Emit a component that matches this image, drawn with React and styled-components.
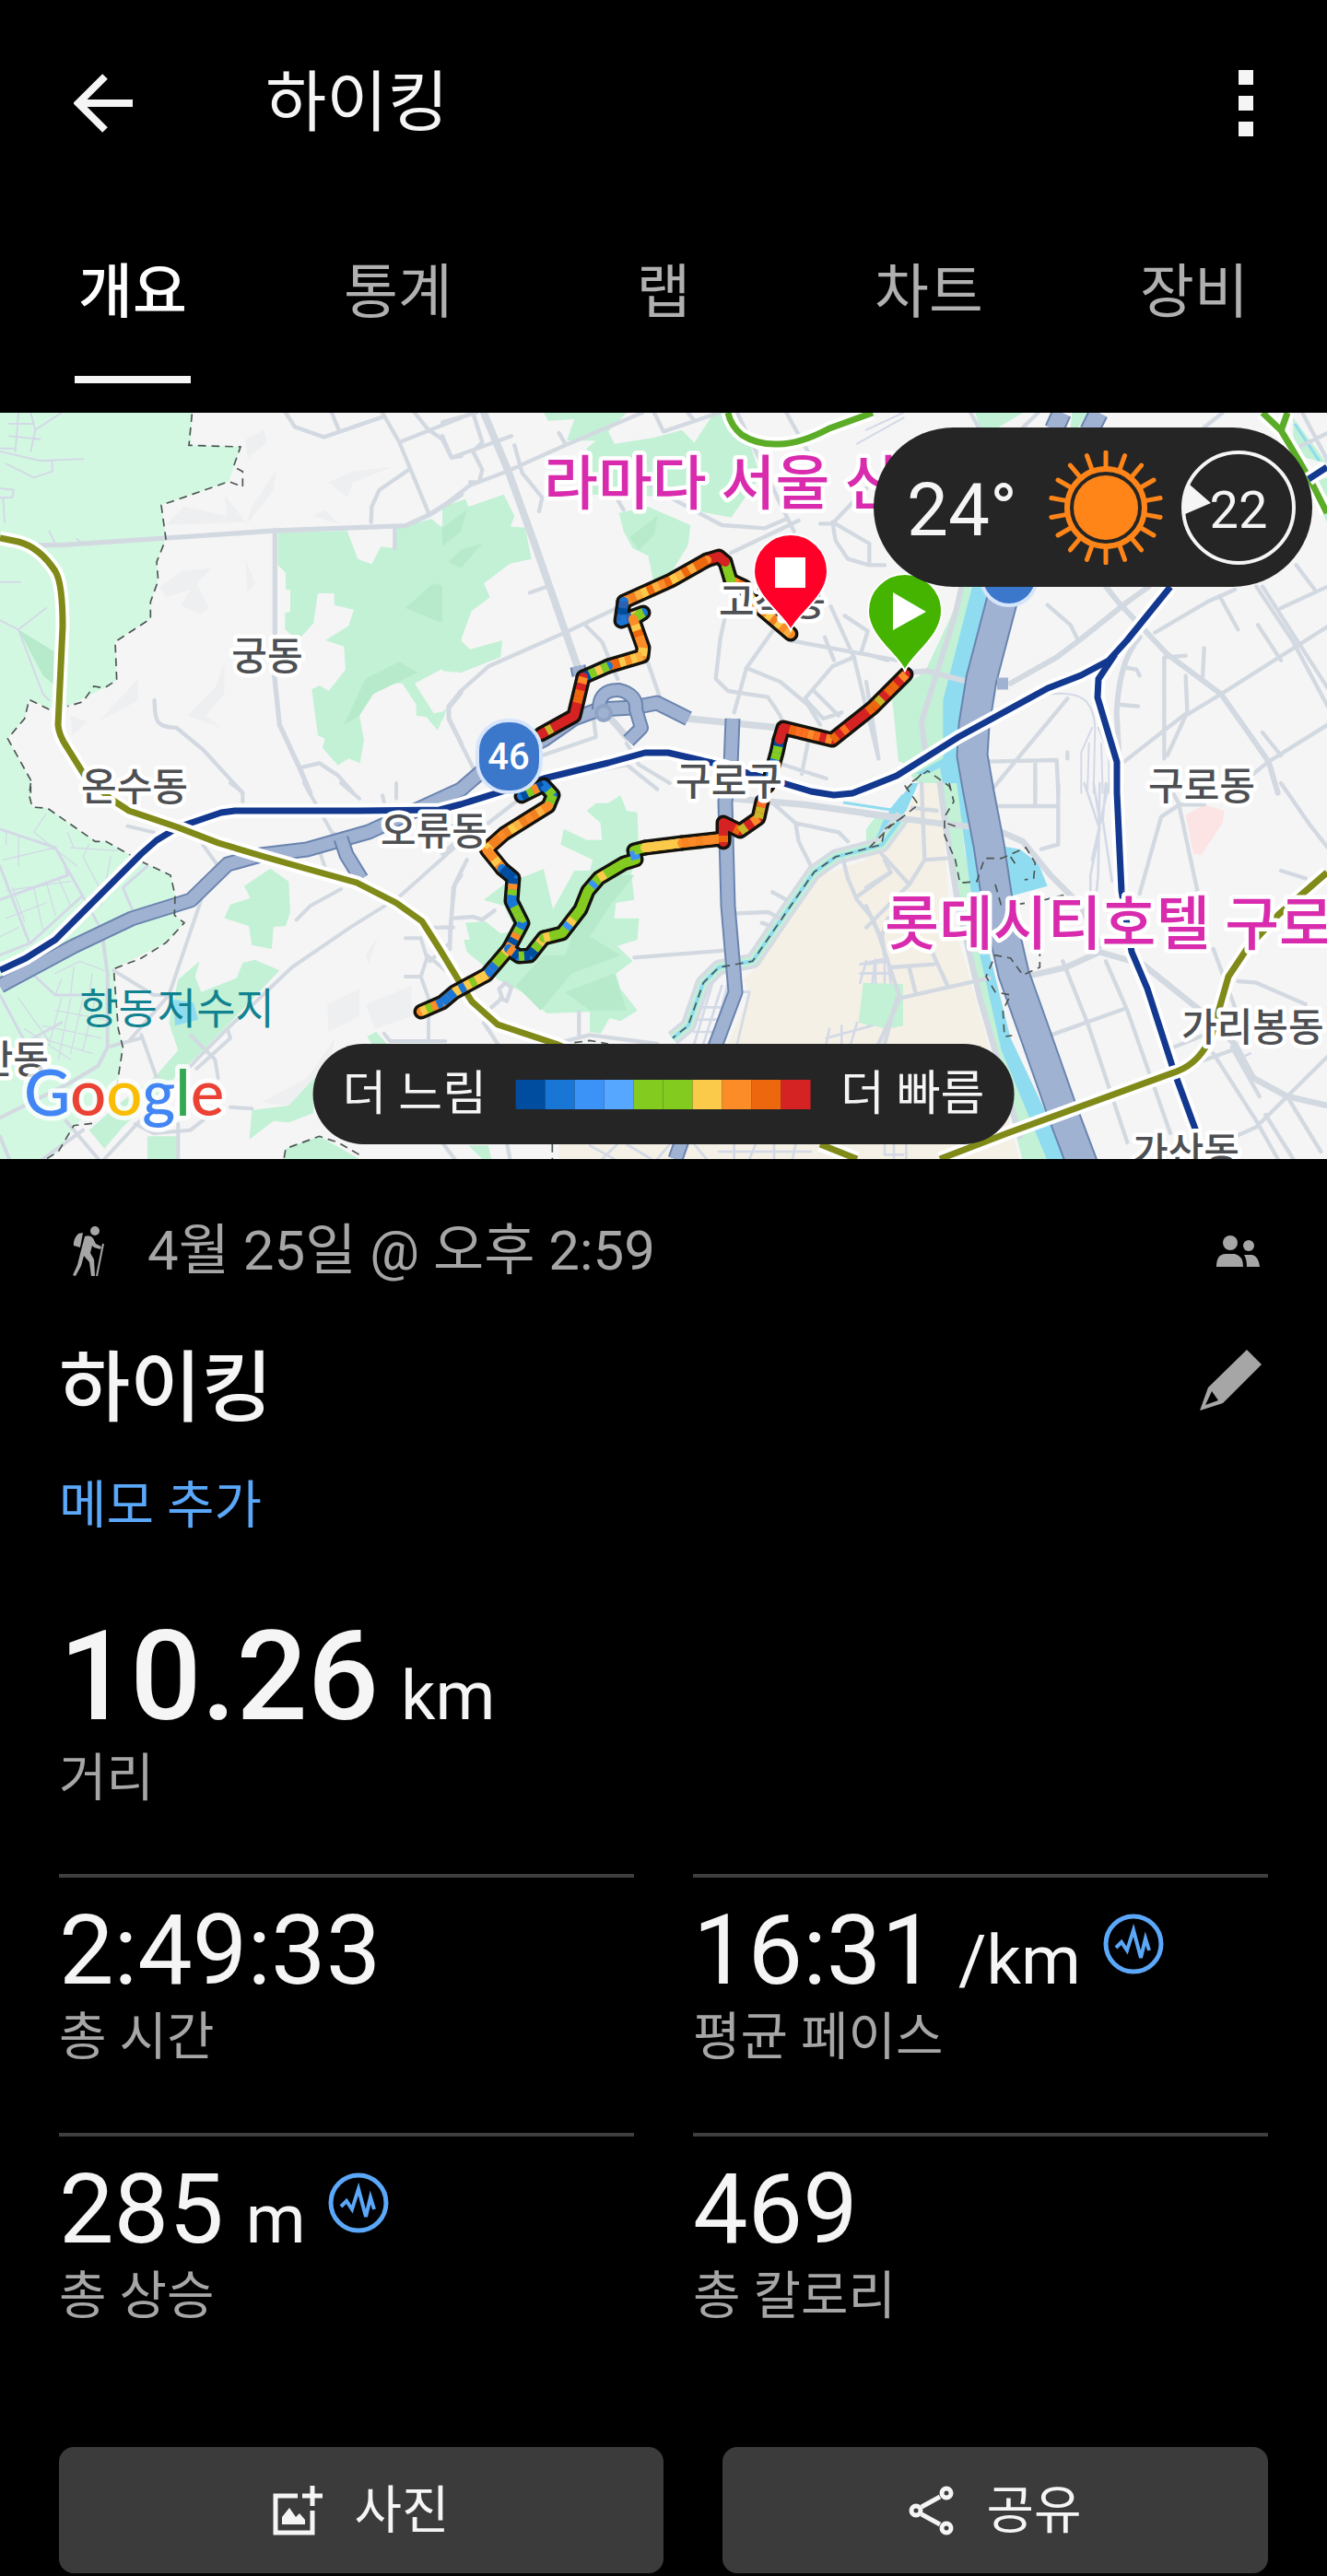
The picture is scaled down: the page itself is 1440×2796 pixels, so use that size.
import React from 'react';
import styled, { createGlobalStyle } from 'styled-components';

const GlobalStyle = createGlobalStyle`
    *, *::before, *::after {
        box-sizing: border-box;
    }
    body {
        margin: 0;
        background: #000;
        color: #f5f5f5;
        font-family: Roboto, 'Noto Sans CJK KR', sans-serif;
    }
    button {
        padding: 0;
        border: 0;
        background: none;
        color: inherit;
        font: inherit;
        cursor: pointer;
    }
    svg {
        display: block;
        flex: none;
    }
`;

const Page = styled.div`
    min-height: 100vh;
`;

const TopBar = styled.header`
    display: flex;
    align-items: center;
    height: 224px;
    padding: 0 72px;
`;

const IconButton = styled.button`
    display: grid;
    place-items: center;
    width: ${(props) => props.$width || 80}px;
    height: 80px;
`;

const BarTitle = styled.h1`
    flex: 1;
    margin: 0 0 0 136px;
    font-size: 72px;
    font-weight: 400;
    line-height: 80px;
`;

const Tabs = styled.nav`
    display: grid;
    grid-template-columns: repeat(5, 1fr);
    justify-items: center;
    height: 224px;
    padding-top: 54px;
`;

const Tab = styled.button`
    height: 138px;
    padding: 0 4px 50px;
    border-bottom: 8px solid ${(props) => (props.$active ? '#f5f5f5' : 'transparent')};
    color: ${(props) => (props.$active ? '#fff' : '#b0b0b0')};
    font-size: 64px;
    font-weight: ${(props) => (props.$active ? 500 : 400)};
    line-height: 80px;
`;

const MapPanel = styled.section`
    position: relative;
    overflow: hidden;
    background: #f5f5f5;
`;

const MapSvg = styled.svg`
    width: 100%;
    height: auto;
`;

const Weather = styled.div`
    position: absolute;
    top: 16px;
    right: 16px;
    display: flex;
    align-items: center;
    gap: 20px;
    height: 173px;
    padding: 0 18px 0 36px;
    border-radius: 87px;
    background: #252525;
`;

const Temperature = styled.span`
    width: 134px;
    padding-top: 6px;
    font-size: 80px;
    line-height: 96px;
`;

const Wind = styled.div`
    display: grid;
    place-items: center;
    font-size: 56px;
    line-height: 64px;

    > * {
        grid-area: 1 / 1;
    }

    span {
        padding-top: 6px;
    }
`;

const Legend = styled.div`
    position: absolute;
    bottom: 16px;
    left: 50%;
    display: flex;
    align-items: center;
    gap: 32px;
    height: 109px;
    padding: 0 32px;
    border-radius: 55px;
    background: #252525;
    font-size: 52px;
    line-height: 64px;
    white-space: nowrap;
    transform: translateX(-50%);
`;

const Scale = styled.div`
    display: flex;
`;

const Swatch = styled.span`
    width: 32px;
    height: 32px;
    background: ${(props) => props.$color};
`;

const Content = styled.main`
    padding: 60px 64px 2px;
`;

const Row = styled.div`
    display: flex;
    align-items: center;
    justify-content: space-between;
`;

const DateText = styled.div`
    display: flex;
    align-items: center;
    gap: 46px;
    padding-left: 14px;
    color: #a6a6a6;
    font-size: 60px;
    line-height: 80px;
`;

const TitleRow = styled(Row)`
    align-items: flex-start;
    margin-top: 60px;
`;

const ActivityTitle = styled.h2`
    margin: 0;
    font-size: 84px;
    font-weight: 500;
    line-height: 100px;
`;

const MemoButton = styled.button`
    display: block;
    margin-top: 36px;
    color: #5ba7f9;
    font-size: 56px;
    line-height: 80px;
`;

const StatValue = styled.div`
    display: flex;
    align-items: baseline;
    gap: 24px;
    height: ${(props) => (props.$large ? 140 : 120)}px;
    font-size: ${(props) => (props.$large ? 136 : 106)}px;
    font-weight: ${(props) => (props.$large ? 500 : 400)};
    line-height: ${(props) => (props.$large ? 140 : 120)}px;

    svg {
        align-self: flex-start;
        margin-top: 20px;
    }
`;

const Unit = styled.span`
    font-size: 74px;
    font-weight: 400;
    line-height: 80px;
`;

const StatLabel = styled.div`
    margin-top: ${(props) => (props.$large ? 8 : 2)}px;
    color: #a6a6a6;
    font-size: 56px;
    line-height: 64px;
`;

const Distance = styled.section`
    margin-top: 76px;
`;

const StatGrid = styled.section`
    display: grid;
    grid-template-columns: 1fr 1fr;
    gap: 72px 64px;
    margin-top: 72px;
`;

const StatCell = styled.div`
    padding-top: 19px;
    border-top: 4px solid #3f3f3f;
`;

const Actions = styled.div`
    display: flex;
    gap: 64px;
    margin-top: 132px;
`;

const ActionButton = styled.button`
    display: flex;
    flex: ${(props) => props.$grow} 1 0;
    align-items: center;
    justify-content: center;
    gap: 34px;
    height: 137px;
    border-radius: 16px;
    background: #3b3b3b;
    font-size: 56px;
    line-height: 64px;
`;

const paceColors = ['#004c9e', '#1976d6', '#3c93f7', '#55a7ff', '#84cb20', '#84cb20', '#fbca4b', '#fb8c27', '#ec670e', '#d52222'];

// The map is drawn from six tiles, each at three units to the pixel.
const tiles = {
    a: [0, -8],
    b: [480, -8],
    c: [940, -8],
    d: [0, 402],
    e: [480, 402],
    f: [940, 402],
};

const Tile = ({ id, children }) => (
    <g transform={`translate(${tiles[id][0]} ${tiles[id][1]}) scale(0.33333)`}>{children}</g>
);

const areas = [
    ['a', '#d3f8e2', 'M0,24H625L620,130L783,135L745,248L525,325L540,435L510,510L515,570L490,640V695L375,770L380,895L340,920L220,980L155,985L95,958L80,1020L25,1085L100,1220V1262H0Z'],
    ['d', '#d3f8e2', 'M0,-2H95L105,78L155,82L310,190H345L470,260L555,300L570,365L568,430L600,455L540,520L370,605L385,800L400,860L380,990L250,1110L190,1200L150,1230H0Z'],
    ['a', '#c2f1d5', 'M905,415L1130,408L1165,500L1210,517L1240,460L1280,465L1290,400L1405,370L1435,395L1467,365L1450,340L1502,310V870L1440,858L1350,905L1412,1003L1450,995L1425,1058L1388,1015L1355,1010L1355,975L1310,905L1280,905L1215,940L1170,1010L1185,1090L1172,1165L1135,1150L1100,1172L1050,1115L1058,1085L1035,1075L1015,925L1040,912L1070,930L1125,860L1120,785L1060,765L1135,718L1152,665L1088,650V612H1035L1020,710L970,765L928,730V675L945,672V600H930V545L905,520Z'],
    ['a', '#b6eacb', 'M1320,660L1410,580L1500,600V700L1430,705ZM1120,1040L1190,890L1300,835L1360,870L1215,940L1170,1010ZM60,730L175,800V910L140,880Z'],
    ['a', '#eeeff0', 'M800,110L860,80L870,120L805,175ZM1070,250L1150,215L1280,200L1150,250L1130,300ZM600,330L740,360L730,290L800,380L540,390ZM820,330L900,210L890,280L800,390ZM520,590L590,540L690,530L640,580L680,660L650,680L590,650L620,600L540,625ZM610,1010L700,920L730,840V940L670,1010L720,1050ZM320,1030L450,890V960ZM1015,360L1060,340L1100,385ZM800,500L830,580L805,610ZM230,1010L285,1030L235,1075Z'],
    ['b', '#c2f1d5', 'M0,330L75,305L85,330L200,290L235,360L222,395L270,398L290,500L220,515L135,580L155,625L95,670L60,765L90,795L195,765L190,820L60,870L0,865ZM330,24H600L540,85L560,125L690,105L780,80L820,122L885,24H930L1000,120L1035,230L940,365L835,345L840,300L480,290L470,140L500,115L405,115L430,45L345,50ZM575,350L670,330L808,390L800,455L735,560L690,585L670,490L620,465L590,410ZM1465,960L1500,920V1160H1485ZM0,1000L15,985L0,1030Z'],
    ['b', '#b6eacb', 'M0,400L80,340L60,410L0,460ZM610,430L700,360L690,420L640,470ZM60,470L130,450L60,530L20,510Z'],
    ['c', '#c2f1d5', 'M355,24H510L430,72H370ZM670,24H720L690,72H665ZM315,590H370L325,760L255,960L250,1160L300,1262H230L160,1225L115,1160L85,930L190,870L270,700ZM1450,250L1500,235V380L1470,320ZM1390,40L1500,190L1430,170L1390,110Z'],
    ['c', '#8fdcf0', 'M345,590H410L325,900L305,1030L300,1180L325,1262H255L240,1180L200,1200L160,1200L250,1150V960ZM1390,60L1400,60L1480,180L1470,182Z'],
    ['e', '#f5f0e6', 'M1502,150L1410,240L1230,300L1110,470L1025,600L980,640L1000,690L930,849L890,900H380V1230H1502Z'],
    ['f', '#f5f0e6', 'M-2,230L100,130L190,0H240L270,400L370,750L500,1230H-2Z'],
    ['e', '#c2f1d5', 'M580,40L600,90L635,95L640,240L615,290L625,380L565,390L560,440H640L635,510L570,530L620,580L565,620L580,670L635,740L580,775L545,765L515,815L480,810V745L340,750L260,680L180,640L130,590L80,550L70,510H90L75,455L140,450L190,490L240,480L200,400L135,380L200,330L330,280L360,410L430,285H480L490,250L385,200L395,150L440,170L470,185H520L515,130L470,90L500,65L540,65ZM1370,650L1500,655V790L1450,800L1355,780ZM85,1180H150L160,1224H130Z'],
    ['e', '#b6eacb', 'M500,300L625,300L545,400L480,500L580,560L420,620L320,740L240,660L330,560L400,560L450,420ZM400,680L560,620L600,740L480,740Z'],
    ['d', '#c2f1d5', 'M880,278L940,320L945,420L930,465L890,468L885,540L820,528L810,465L730,440L750,395L815,375L795,335ZM650,580L635,630L655,680L770,635L790,585L830,575L910,610L740,790L600,930L400,1120L340,1190L290,1130L380,1050L510,950L580,870L550,780L580,640ZM1030,930L940,1050L820,1065L812,1160L890,1100L940,1105L1020,1075ZM920,1224L930,1190L1040,1150L1170,1224ZM1195,825L1225,810L1260,849H1210ZM480,1150H580V1224H480Z'],
    ['d', '#eeeff0', 'M1065,720L1170,670V760L1070,810ZM1190,720L1340,660V760L1220,800ZM1190,560L1230,500L1200,590ZM850,1040L1000,960L1090,830L1080,900L940,1050Z'],
    ['d', '#8fdcf0', 'M565,705L630,715L645,770L570,790Z'],
    ['f', '#c2f1d5', 'M0,655L75,655L105,700L90,760L0,795ZM235,0H300L320,220L395,560L450,870L600,1230H510L380,750L310,400L265,150ZM0,150L30,110L100,100L30,190L0,215Z'],
    ['f', '#8fdcf0', 'M295,0H330L350,200L395,530L470,830L660,1230H590L440,870L370,560L320,200ZM440,205L500,215L560,260L590,335L465,370ZM60,110L150,0H170L130,90L20,210Z'],
    ['f', '#fce4e4', 'M1040,105L1100,70L1165,90L1160,130L1090,235L1065,230Z'],
];

const roads = [
    ['a', 16, 'M120,455L200,455L895,408L1320,392L1400,355L1502,290M895,408V740M890,850L910,1040L975,1180L1010,1262'],
    ['a', 13, 'M975,1180L1040,1165L1100,1205L1150,1262M930,24L960,70L1055,103L1245,38M1245,24L1300,120L1395,350M1300,120L1502,40M1350,24L1395,80L1440,110L1470,170L1502,165M1080,24L1105,85M1330,210L1235,275L1210,330L1208,380M1285,400V465M503,960C503,1040 515,1045 575,1050L660,1120L790,1262M1502,935L1462,985V1020L1502,1100'],
    ['a', 6, 'M0,150L130,180L270,175M60,24L50,150M100,24L115,80L100,150M0,140H50M30,60H110M30,100L130,110M115,80L200,24M20,190L110,235L170,215V180M0,270L45,275L40,300H0M10,300L15,380M0,700L60,730L150,660M60,730L140,940L160,960M0,575H65M160,410L180,450M250,435L270,450'],
    ['b', 24, 'M135,24L215,215L300,450L440,850'],
    ['b', 13, 'M0,55L110,24M0,330L90,260L210,215L400,130L650,24M0,100L30,170L225,100M100,24L130,120L100,150L130,210L120,250H90M235,130L260,220L325,300L315,345M380,90L400,125M690,24L720,85L900,24M800,24L820,50M100,1180L20,1020V980L60,930L150,850L410,735L600,645M465,715L520,770L570,890M670,840L715,970M940,480L1160,375M680,260L760,310L910,390L1050,400L1120,370M560,290L590,340M960,24L1040,190L1100,320L1145,410M1120,24L1190,150M1230,385H1270L1380,270M1270,380L1280,440L1320,500L1390,520H1440M1270,380L1390,450V520M1130,765L1480,830M1265,655L1340,820L1420,1150M1310,685L1385,735L1365,800'],
    ['b', 13, 'M1340,820L1270,850L1180,955L1240,1020L1300,1000M1210,930L1290,1010M1075,735L990,855L950,1000M990,855L1100,900L1190,975L1230,1040M920,690L905,760L890,890L930,930L1060,950L1100,1010L1110,1040M1245,755L1275,830M1190,1100L1170,1200M325,1140L500,1080L490,1000M285,610L340,590M330,1225L600,1170L700,1250M600,1100L640,1170L740,1230M1110,1170L1250,1215'],
    ['b', 22, 'M800,1020L900,1030L1100,1050M540,1010L600,1080'],
    ['b', 6, 'M1350,125L1502,40'],
    ['c', 18, 'M310,590L290,680L180,1030L195,1150M140,870L200,865L330,900M470,905L620,820L700,760L850,640L920,590M780,590L820,640L980,810L1155,940L1240,1060L1310,1160L1340,1262M890,755C840,810 820,900 815,1000L830,1262'],
    ['c', 13, 'M590,650L665,715L685,755M940,740L1110,640L1200,600M970,820V1150M1040,880L1045,1000L840,1160M1155,940L1040,1010L980,1140M1155,940L1502,720M1100,790L1095,890M980,820L1040,815M1270,590L1390,770L1502,980M1290,590L1502,920M1150,620L1210,730M1275,715L1350,830M1350,660L1502,590M1310,1160L1502,1040M1260,1200L1310,1160M1290,1065L1350,1140M830,975L885,980M850,855L880,860L890,880M655,955L400,1262M390,1160L620,1155L625,1262M550,1160V1262M1400,520L1460,600M1400,140L1502,90M1420,24L1502,180M1100,72L1160,24M340,24L370,80M510,72L560,24M0,810L70,830M0,900L40,1150M655,1130V1150'],
    ['c', 6, 'M600,940C700,930 740,960 745,1050L740,1262M735,1050L700,1130V1262M755,1050L790,1130V1262M725,1100L720,1262M765,1100L770,1262M0,80L120,24'],
    ['d', 12, 'M350,860L350,620L335,510M350,860L460,830M350,860L320,920L220,980L0,1090M655,380L550,690L420,840M370,610L500,690H540M460,820L510,960M340,1224L640,900L740,800L950,600L1140,470L1300,370L1502,190M620,820L700,900L710,960M740,800L750,830L640,930M965,445L1010,400L1110,345M415,140L500,160M660,200L710,270M750,0L790,30V60M990,0L1080,160L1110,180M1040,220L1060,280M1110,0L1170,50M1245,40L1250,60M1290,0V50M1320,505H1370L1390,570L1370,630H1320M1370,630L1395,700V840M1250,815L1270,840H1450M1502,300L1475,340L1465,520L1400,580M1400,470H1460M1390,560L1450,610M215,1100L320,1224M440,1110L500,1140L620,1130L670,1090M750,1055L820,1060M580,1110V1224M0,1150L30,1224M140,1224L270,1130'],
    ['d', 9, 'M0,150L60,170L180,210L265,360L320,460M0,270L95,520M0,380L220,300L210,260M430,410L400,340L480,270M0,560L100,520L265,370M115,630L180,690H350M0,690L80,840M0,890L200,780'],
    ['d', 4, 'M60,170V270M20,350L230,320M20,440L150,390M110,340L140,480M40,340L80,450M150,320L180,430M190,310L230,400M0,500L60,470M230,210L380,220M220,160L240,210M290,200L270,240L330,350M150,100L110,160L250,270M360,240L330,400M10,250L180,210M60,700L160,840M200,700L160,850M230,700L190,900M270,700L230,880M310,700L270,870M180,740L340,770M140,790L330,830M130,830L300,880M200,640L180,690M240,600L230,690M300,620L290,700M20,160V200M80,800L230,900M180,620L260,580L340,610'],
    ['e', 13, 'M80,250L40,330L25,480V540M0,470H35M40,440L100,435L130,445L170,415M160,730L195,700L185,670L205,650L225,665L210,710L190,700M445,745V820M400,840L480,820L700,849M135,780L180,849M1070,60L1150,130L1160,190L1200,270M1150,130L1290,160L1320,190M1305,250L1320,310L1350,380L1400,440L1430,510M1430,490L1440,560M1350,370L1460,290L1440,250M945,425L1060,420L1100,440M1040,455L1070,465M625,568L920,545M1075,355L1120,380M1480,700L1440,849M1450,440L1430,500M0,230L70,170M150,130L240,60M20,140H50M210,1170L220,1224M0,1170L40,1224'],
    ['e', 22, 'M940,50L1180,70L1502,115'],
    ['e', 8, 'M880,650L820,849M910,660L850,849M930,650L900,770M830,770H900M840,730H920M820,810H880M970,680H1000L960,849M1380,580L1360,650M1410,575L1400,650M1440,575L1440,650M1360,620H1460M1360,590L1450,570M1260,800L1250,849M1300,790V849M1350,780L1330,849M1250,830L1400,790M480,1180L560,1224M520,1224L570,1176M600,1176L680,1224M700,1224L740,1176M820,1176L860,1224M900,1200H1200M950,1176V1224M1020,1176L1000,1224M1080,1176V1224M1150,1176L1140,1224M1440,1176V1210H1500'],
    ['f', 20, 'M0,100L230,130L420,150L510,190L600,300L700,400L760,530M520,630L650,600L760,550L900,590L1100,750L1200,850L1260,960L1370,1020L1502,1050M240,0L260,150L300,400L370,700L500,1150'],
    ['f', 13, 'M420,75H625M625,0V200L570,215M550,0V70M890,360L960,110L1020,70L1100,70M1020,80L1080,360M1130,540L1200,730M1350,0L1440,130L1502,210M640,580L720,780L850,1170M780,580L850,740L990,1140M575,830L840,735M1000,860L1150,800M1050,920L1190,870M1130,880L1270,1100L1340,1224M1190,860L1280,1020M1502,890L1270,1120L1180,1160M1370,1020L1480,1200M1300,1080L1390,1224M1210,645L1270,650L1430,720M1350,285L1430,310M980,0L1020,70M180,0L190,250L140,330L50,230M190,250L260,245M140,330L0,470M0,340L80,290M0,400L40,490L110,700L400,635M110,700L40,849M210,540L265,660M80,600L220,590M150,80L230,90M140,600L160,680'],
    ['f', 8, 'M710,0L760,150L730,300V400M760,0L755,300L745,400M780,0L770,120L800,320M740,0L760,120M790,0L735,250M0,590L70,580L80,650M30,590V650M0,620H80M90,1176V1224M130,1176V1224M1230,890L1250,880'],
];

const boundaries = [
    ['a', 'M625,28L615,130L783,135L760,200L790,215V265L745,248L525,325L540,435L510,510L515,570L490,640V695L375,770L380,895L340,920L305,915L270,965L220,980M160,990L95,958L80,1020L25,1085L100,1220V1262'],
    ['d', 'M100,0L95,40L105,78L155,82L310,190H345L470,260L555,300L570,365L568,430L600,455L540,520L460,570L370,605L385,800L400,860L380,990M300,1108L240,1115L190,1200L150,1224M925,1220L930,1190L1040,1150L1100,1170L1170,1210'],
    ['e', 'M1500,110L1440,150L1430,200L1280,240L1210,290L1120,420L1010,580L900,600L850,650L800,790L750,830M430,845L480,838L540,849M358,1176V1224'],
    ['c', 'M150,1225L200,1190L270,1240L280,1262M130,1250L180,1200'],
    ['f', 'M270,0L285,60L255,110L255,170L290,250L305,325L360,320L385,245L440,245L520,210L550,260L545,310L515,315M290,140L260,130M10,210L80,140L170,70L120,0M420,330L440,400M490,395L560,385L640,365L665,400M565,450V600L510,625L470,570L420,560L390,630L420,680L470,690L445,740L450,825L475,822M470,240L490,270'],
];

const highways = [
    'M0,622L80,579L143,549L207,529L247,490L283,480L333,474L400,455L500,409L523,389L590,355L623,332L650,322L687,320L713,315L747,332',
    'M370,462L376,480L392,506',
    'M627,275L629,285',
    'M795,332L793,382L787,422L790,535L798,629L777,685L733,810',
];

const navyLines = [
    'M0,605L28,592L60,572L153,479L170,464L193,450L240,434L255,432L390,432L477,431L500,425L590,397L660,380L700,369L725,369L773,380L850,402L880,411L905,415L925,413L943,406L973,394L1040,352L1137,299L1173,285L1203,269L1223,247L1270,189M1420,72L1440,59',
    'M1210,262L1192,289L1191,309L1212,379V412L1217,519L1228,585L1245,625L1273,712L1298,780',
];

const oliveLines = [
    'M0,136L20,140Q43,146 60,172Q68,185 68,232L63,339Q64,350 72,362L92,394L120,419L140,432L193,450L237,467L287,482L333,495L387,510L430,532L458,552L477,582L497,615L512,639L540,664L603,685L650,705',
    'M890,794L930,810M1020,810L1093,782L1277,715Q1303,705 1315,675L1333,612L1353,582L1387,545L1440,499',
];

const greenLines = ['M790,0Q793,14 805,24Q822,35 845,34Q868,34 900,17L947,0', 'M1370,0L1390,19L1402,39L1423,75L1440,109M1397,0L1390,20'];

const { hot, warm, mixed, cool } = {
    hot: ['#d52222', '#fb8c27', '#ec670e', '#d52222', '#ec670e', '#d52222', '#c8b828', '#fb7020'],
    warm: ['#fb8c27', '#fb8c27', '#f08020', '#fbca4b', '#fb8c27', '#ec670e', '#fbb040'],
    mixed: ['#1976d6', '#84cb20', '#004c9e', '#fbca4b', '#fb8c27', '#2a62b0', '#84cb20'],
    cool: ['#84cb20', '#84cb20', '#84cb20', '#fbca4b', '#84cb20', '#84cb20', '#3c93f7'],
};

const trackParts = [
    [warm, [[858, 240], [817, 205], [808, 189], [793, 182]]],
    [['#84cb20', '#fbca4b'], [[793, 182], [787, 162]]],
    [['#d52222', '#ec670e'], [[787, 162], [780, 156], [767, 160]]],
    [warm, [[767, 160], [728, 182], [677, 205]]],
    [mixed, [[677, 205], [674, 226], [698, 217], [687, 224]]],
    [warm, [[687, 224], [698, 255], [697, 264], [660, 275]]],
    [mixed, [[660, 275], [633, 287]]],
    [hot, [[633, 287], [623, 329], [587, 349]]],
    [mixed, [[566, 416], [590, 404], [600, 415], [595, 427]]],
    [warm, [[595, 427], [547, 457], [528, 474], [545, 495]]],
    [mixed, [[545, 495], [557, 505], [555, 530], [567, 554], [552, 582]]],
    [['#fb8c27', '#fbca4b', '#84cb20', '#1976d6', '#84cb20', '#84cb20'], [[552, 582], [528, 610], [493, 629], [480, 640], [457, 650]]],
    [mixed, [[552, 582], [563, 590], [575, 589], [590, 570]]],
    [cool, [[590, 570], [610, 565], [630, 539], [638, 519], [650, 505], [677, 489], [690, 485], [688, 475], [700, 472]]],
    [['#fbca4b'], [[700, 472], [740, 467]]],
    [['#fb8c27', '#f98420'], [[740, 467], [785, 462]]],
    [hot, [[785, 466], [785, 445], [803, 454], [823, 440], [827, 422]]],
    [mixed, [[833, 405], [843, 369], [846, 355]]],
    [hot, [[846, 355], [850, 342], [903, 355], [947, 320], [983, 284]]],
];

const toPath = (points) => 'M' + points.map((point) => point.join(',')).join('L');

// Cuts a line into short pieces so that every piece can carry its own pace colour.
const splitLine = (points, step) => {
    const pieces = [];
    for (let i = 1; i < points.length; i++) {
        const [x1, y1] = points[i - 1];
        const [x2, y2] = points[i];
        const count = Math.max(1, Math.round(Math.hypot(x2 - x1, y2 - y1) / step));
        for (let k = 0; k < count; k++) {
            const a = k / count;
            const b = (k + 1) / count;
            pieces.push([
                [x1 + (x2 - x1) * a, y1 + (y2 - y1) * a],
                [x1 + (x2 - x1) * b, y1 + (y2 - y1) * b],
            ]);
        }
    }
    return pieces;
};

const pickColor = (colors, seed) => {
    const noise = Math.abs(Math.sin(seed * 12.9898) * 43758.5453);
    return colors[Math.floor((noise % 1) * colors.length)];
};

const Track = () => (
    <g fill="none" strokeLinecap="round" strokeLinejoin="round">
        {trackParts.map(([, points], i) => (
            <path key={i} d={toPath(points)} stroke="#14120c" strokeWidth="17" />
        ))}
        {trackParts.map(([colors, points], i) => (
            <g key={i}>
                <path d={toPath(points)} stroke={colors[0]} strokeWidth="10" />
                {splitLine(points, 7).map((piece, k) => (
                    <path key={k} d={toPath(piece)} stroke={pickColor(colors, k + i * 31 + 1)} strokeWidth="10" strokeLinecap="butt" />
                ))}
            </g>
        ))}
    </g>
);

const CasedLines = ({ lines, color }) => (
    <g fill="none" strokeLinejoin="round">
        {lines.map((d) => (
            <path key={d} d={d} stroke="#fff" strokeWidth="15" />
        ))}
        {lines.map((d) => (
            <path key={d} d={d} stroke={color} strokeWidth="7" />
        ))}
    </g>
);

const Highway = ({ d, width }) => (
    <>
        <path d={d} stroke="#6a84b0" strokeWidth={width} />
        <path d={d} stroke="#a0b2d1" strokeWidth={width - 4} />
    </>
);

const MapText = styled.text`
    fill: ${(props) => props.$color || '#4d4f52'};
    stroke: ${(props) => (props.$bare ? 'none' : '#fff')};
    stroke-width: 9px;
    stroke-linejoin: round;
    paint-order: stroke;
    font-size: ${(props) => props.$size || 42}px;
    font-weight: ${(props) => props.$weight || 500};
    text-anchor: ${(props) => props.$anchor || 'middle'};
`;

const Logo = styled.text`
    stroke: #fff;
    stroke-opacity: 0.8;
    stroke-width: 10px;
    stroke-linejoin: round;
    paint-order: stroke;
    font-family: Lato, sans-serif;
    font-size: 69px;
    font-weight: 500;
`;

const streamPath = 'M980,438L957,469L907,482L883,499L853,542L817,595L780,602L763,619L747,665L730,679';
const loopPath = 'M650,322Q650,300 672,301Q692,306 690,322L696,342L682,356';

const RouteMap = () => (
    <MapSvg viewBox="0 0 1440 810" role="img" aria-label="하이킹 경로 지도">
        <rect width="1440" height="810" fill="#f5f5f5" />
        {areas.map(([id, fill, d], i) => (
            <Tile id={id} key={i}>
                <path d={d} fill={fill} />
            </Tile>
        ))}
        <g fill="none" strokeLinejoin="round">
            <path d={streamPath} stroke="#d5dbe3" strokeWidth="17" />
            <path d={streamPath} stroke="#c2f1d5" strokeWidth="9" />
            <path d={streamPath} stroke="#8fdcf0" strokeWidth="4" />
            <path d="M915,423L967,431L980,415" stroke="#8fdcf0" strokeWidth="3" />
        </g>
        {roads.map(([id, width, d], i) => (
            <Tile id={id} key={i}>
                <path d={d} fill="none" stroke={width < 10 ? '#d3d9e6' : '#d3d9e1'} strokeWidth={width} strokeLinecap="round" strokeLinejoin="round" />
            </Tile>
        ))}
        <g fill="none" strokeLinejoin="round">
            {highways.map((d) => (
                <Highway key={d} d={d} width={17} />
            ))}
            <path d={loopPath} stroke="#6a84b0" strokeWidth="16" />
            <path d={loopPath} stroke="#a0b2d1" strokeWidth="12" />
            <circle cx="655" cy="326" r="8" fill="#a0b2d1" stroke="#8fa3c6" strokeWidth="4" />
            <Highway d="M1152,0L1144,18M1192,0L1182,20" width={22} />
            <Highway d="M1100,165L1087,205L1065,289L1057,339L1055,372L1062,412L1073,469L1083,535L1100,609L1127,685L1153,759L1176,820" width={35} />
            <path d="M1082,294L1094,294" stroke="#a0b2d1" strokeWidth="13" />
        </g>
        {boundaries.map(([id, d], i) => (
            <Tile id={id} key={i}>
                <path d={d} fill="none" stroke="#4c5653" strokeWidth="5" strokeDasharray="26 18" />
            </Tile>
        ))}
        <CasedLines lines={greenLines} color="#5bad27" />
        <CasedLines lines={navyLines} color="#12388f" />
        <CasedLines lines={oliveLines} color="#808a18" />

        <circle cx="1095" cy="179" r="30" fill="#3b78cc" stroke="#d6e5fb" strokeWidth="4" />
        <Track />
        <rect x="518" y="334" width="69" height="78" rx="33" fill="#3b78cc" stroke="#d6e5fb" strokeWidth="4" />
        <MapText x="552" y="387" $size={40} $color="#fff" $bare>46</MapText>

        <MapText x="290" y="279">궁동</MapText>
        <MapText x="146" y="421">온수동</MapText>
        <MapText x="471" y="469">오류동</MapText>
        <MapText x="791" y="415">구로구</MapText>
        <MapText x="838" y="220">고척동</MapText>
        <MapText x="1304" y="420">구로동</MapText>
        <MapText x="1282" y="682" $anchor="start">가리봉동</MapText>
        <MapText x="1287" y="817">가산동</MapText>
        <MapText x="53" y="717" $anchor="end">안동</MapText>
        <MapText x="192" y="663" $size={46} $color="#118290" $weight={400} $bare>항동저수지</MapText>
        <MapText x="590" y="99" $size={64} $color="#d92bae" $anchor="start">라마다 서울 신도림</MapText>
        <MapText x="960" y="577" $size={64} $color="#d92bae" $anchor="start">롯데시티호텔 구로</MapText>
        <Logo x="26" y="763">
            <tspan fill="#4285f4">G</tspan>
            <tspan fill="#ea4335">o</tspan>
            <tspan fill="#fbbc05">o</tspan>
            <tspan fill="#4285f4">g</tspan>
            <tspan fill="#34a853">l</tspan>
            <tspan fill="#ea4335">e</tspan>
        </Logo>

        <g stroke="#fff" strokeWidth="2">
            <path d="M858,236C850,218 818,200 818,172A40,40 0 0 1 898,172C898,200 866,218 858,236Z" fill="#ff0028" />
            <path d="M982,280C974,262 942,243 942,215A40,40 0 0 1 1022,215C1022,243 990,262 982,280Z" fill="#45b400" />
        </g>
        <rect x="841" y="157" width="33" height="33" fill="#fff" />
        <path d="M969,195V236L1005,216Z" fill="#fff" />
    </MapSvg>
);

const Sun = () => (
    <svg width="124" height="124" viewBox="-62 -62 124 124" fill="none" stroke="#ff8519" aria-label="맑음" role="img">
        <circle r="35" fill="#ff8519" stroke="none" />
        <circle r="42" strokeWidth="6" />
        {Array.from({ length: 18 }, (_, i) => (
            <path key={i} d="M0,-44V-60" strokeWidth="5" strokeLinecap="round" transform={`rotate(${i * 20})`} />
        ))}
    </svg>
);

const WindDial = () => (
    <svg width="124" height="124" viewBox="-62 -62 124 124" aria-hidden="true">
        <circle r="60" fill="none" stroke="#f5f5f5" strokeWidth="4" />
        <path d="M-53,-25L-30,-5L-58,7Q-62,-10 -53,-25Z" fill="#f5f5f5" />
    </svg>
);

const BackIcon = () => (
    <svg width="64" height="64" viewBox="0 0 64 64" fill="none" stroke="#f5f5f5" strokeWidth="8" aria-hidden="true">
        <path d="M64,32H6M34,3L5,32L34,61" />
    </svg>
);

const MoreIcon = () => (
    <svg width="16" height="72" viewBox="0 0 16 72" fill="#f5f5f5" aria-hidden="true">
        <path d="M0,0H16V16H0ZM0,28H16V44H0ZM0,56H16V72H0Z" />
    </svg>
);

const HikerIcon = () => (
    <svg width="36" height="56" viewBox="0 0 36 56" fill="#a6a6a6" aria-hidden="true">
        <circle cx="25" cy="6" r="5" />
        <path d="M7,9L12,8L9,24L2,22Q1,15 7,9Z" />
        <path d="M14,12Q20,10 23,14L26,20L32,23L31,26L24,24L22,22L20,30L24,37L25,55H21L19,40L13,33L10,44L4,55L1,54L6,43L10,27Z" />
        <path d="M34,20L27,55" stroke="#a6a6a6" strokeWidth="2" />
    </svg>
);

const PeopleIcon = () => (
    <svg width="48" height="34" viewBox="0 0 48 34" fill="#a6a6a6" aria-hidden="true">
        <circle cx="15" cy="8" r="8" />
        <circle cx="35" cy="11" r="6" />
        <path d="M0,34Q0,20 10,20H20Q29,22 29,34ZM30,21H39Q46,23 47,34H33Q33,26 30,21Z" />
    </svg>
);

const PencilIcon = () => (
    <svg width="68" height="68" viewBox="0 0 68 68" fill="#a6a6a6" aria-hidden="true">
        <path d="M51,1L67,17L25,59L0,67L9,42ZM13,46L6,61L20,56Z" fillRule="evenodd" />
    </svg>
);

const PulseIcon = () => (
    <svg width="66" height="66" viewBox="0 0 66 66" fill="none" stroke="#5ba7f9" strokeWidth="5" aria-hidden="true">
        <circle cx="33" cy="33" r="30" />
        <path d="M14,37L20,31L26,40L33,18L41,48L46,27L50,40" strokeWidth="4" />
    </svg>
);

const PhotoIcon = () => (
    <svg width="54" height="54" viewBox="0 0 54 54" fill="none" stroke="#f5f5f5" strokeWidth="5" aria-hidden="true">
        <path d="M27,11H3V51H43V27M32,11H54M43,0V22" />
        <path d="M10,42V34L18,24L25,34L29,30L35,37V42Z" fill="#f5f5f5" stroke="none" />
    </svg>
);

const ShareIcon = () => (
    <svg width="50" height="54" viewBox="0 0 50 54" fill="none" stroke="#f5f5f5" strokeWidth="5" aria-hidden="true">
        <path d="M14,23L34,12M14,31L34,42" />
        <circle cx="8" cy="27" r="5" />
        <circle cx="41" cy="8" r="5" />
        <circle cx="41" cy="46" r="5" />
    </svg>
);

const tabs = ['개요', '통계', '랩', '차트', '장비'];

const stats = [
    { value: '2:49:33', label: '총 시간' },
    { value: '16:31', unit: '/km', label: '평균 페이스', graph: true },
    { value: '285', unit: 'm', label: '총 상승', graph: true },
    { value: '469', label: '총 칼로리' },
];

class App extends React.Component {
    constructor(props) {
        super(props);
        this.state = { activeTab: '개요' };
    }

    render() {
        return (
            <Page>
                <GlobalStyle />
                <TopBar>
                    <IconButton aria-label="뒤로"><BackIcon /></IconButton>
                    <BarTitle>하이킹</BarTitle>
                    <IconButton aria-label="더보기" $width={32}><MoreIcon /></IconButton>
                </TopBar>
                <Tabs>
                    {tabs.map((tab) => (
                        <Tab key={tab} $active={tab === this.state.activeTab} onClick={() => this.setState({ activeTab: tab })}>
                            {tab}
                        </Tab>
                    ))}
                </Tabs>
                <MapPanel>
                    <RouteMap />
                    <Weather>
                        <Temperature>24°</Temperature>
                        <Sun />
                        <Wind>
                            <WindDial />
                            <span>22</span>
                        </Wind>
                    </Weather>
                    <Legend>
                        <span>더 느림</span>
                        <Scale>
                            {paceColors.map((color, i) => (
                                <Swatch key={i} $color={color} />
                            ))}
                        </Scale>
                        <span>더 빠름</span>
                    </Legend>
                </MapPanel>
                <Content>
                    <Row>
                        <DateText>
                            <HikerIcon />
                            <span>4월 25일 @ 오후 2:59</span>
                        </DateText>
                        <IconButton aria-label="공개 범위" $width={64}><PeopleIcon /></IconButton>
                    </Row>
                    <TitleRow>
                        <ActivityTitle>하이킹</ActivityTitle>
                        <IconButton aria-label="편집"><PencilIcon /></IconButton>
                    </TitleRow>
                    <MemoButton>메모 추가</MemoButton>
                    <Distance>
                        <StatValue $large>
                            10.26<Unit>km</Unit>
                        </StatValue>
                        <StatLabel $large>거리</StatLabel>
                    </Distance>
                    <StatGrid>
                        {stats.map((stat) => (
                            <StatCell key={stat.label}>
                                <StatValue>
                                    {stat.value}
                                    {stat.unit ? <Unit>{stat.unit}</Unit> : null}
                                    {stat.graph ? <PulseIcon /> : null}
                                </StatValue>
                                <StatLabel>{stat.label}</StatLabel>
                            </StatCell>
                        ))}
                    </StatGrid>
                    <Actions>
                        <ActionButton $grow={41}><PhotoIcon />사진</ActionButton>
                        <ActionButton $grow={37}><ShareIcon />공유</ActionButton>
                    </Actions>
                </Content>
            </Page>
        );
    }
}

export default App;
